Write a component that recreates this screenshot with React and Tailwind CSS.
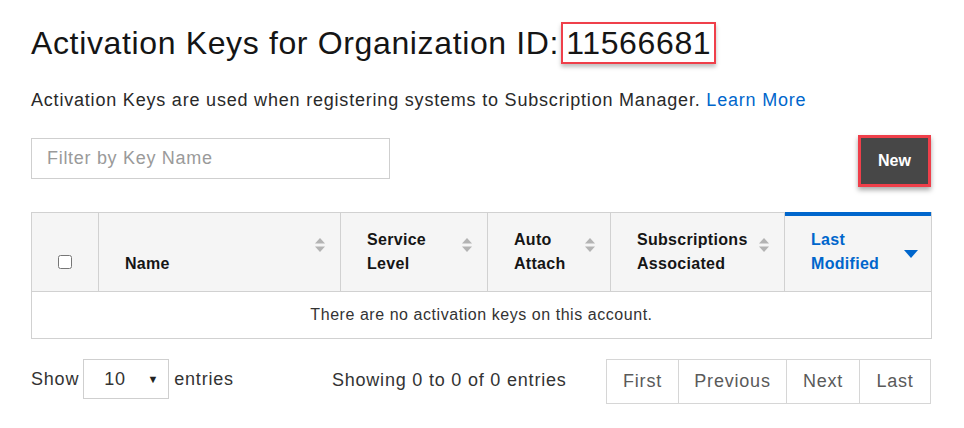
import { useState } from "react";

const columns = [
    { key: "name", label: ["Name"], width: "w-[242px]" },
    { key: "service", label: ["Service", "Level"], width: "w-[147px]" },
    { key: "auto", label: ["Auto", "Attach"], width: "w-[123px]" },
    { key: "subs", label: ["Subscriptions", "Associated"], width: "w-[174px]" },
];

const SortIcon = () => (
    <svg width="12" height="14" viewBox="0 0 12 14" className="shrink-0 self-center">
        <path d="M6 0 L11 5.5 H1 Z" fill="#b3b3b3" />
        <path d="M1 8.5 H11 L6 14 Z" fill="#b3b3b3" />
    </svg>
);

const App = () => {
    const [filter, setFilter] = useState("");
    const [perPage, setPerPage] = useState("10");

    return (
        <div className="min-h-screen bg-white pl-[31px] pr-[33px] pt-[22px] font-['Liberation_Sans',sans-serif] text-[#151515]">
            <h1 className="flex items-center text-[32px] font-medium leading-[42px] tracking-[0.64px]">
                <span>Activation Keys for Organization ID:</span>
                <span className="ml-[2px] border-2 border-[#ef3f4a] px-[3px] leading-[38px] shadow-[0_3px_4px_rgba(0,0,0,0.25)]">
                    11566681
                </span>
            </h1>

            <p className="mt-[23px] text-[18px] leading-[26px] tracking-[0.8px] text-[#292929]">
                Activation Keys are used when registering systems to Subscription Manager.{" "}
                <a href="#" className="text-[#0066cc]">Learn More</a>
            </p>

            <div className="mt-[22px] flex items-start justify-between">
                <input
                    type="text"
                    placeholder="Filter by Key Name"
                    value={filter}
                    onChange={(e) => setFilter(e.target.value)}
                    className="mt-[3px] h-[41px] w-[359px] border border-[#cfcfcf] px-[15px] text-[18px] tracking-[0.7px] text-[#333] placeholder-[#9a9a9a] outline-none"
                />
                <div className="border-[3px] border-[#ef3f4a] shadow-[0_3px_5px_rgba(0,0,0,0.35)]">
                    <button className="h-[46px] w-[67px] bg-[#474747] text-[16px] font-bold text-white">
                        New
                    </button>
                </div>
            </div>

            <table className="mt-[25px] w-[900px] table-fixed border-collapse border border-[#d1d1d1]">
                <thead>
                    <tr className="h-[79px] bg-[#f5f5f5]">
                        <th className="w-[67px] border border-[#d1d1d1] align-middle">
                            <input type="checkbox" className="mt-[26px] h-[14px] w-[14px]" />
                        </th>
                        {columns.map((c) => (
                            <th key={c.key} className={`${c.width} border border-[#d1d1d1] p-0`}>
                                <div className="flex h-[78px] items-end justify-between pb-[15px] pl-[26px] pr-[14px]">
                                    <div className="text-left text-[16px] font-bold leading-[24px] tracking-[0.3px] text-[#151515]">
                                        {c.label.map((l) => (
                                            <div key={l}>{l}</div>
                                        ))}
                                    </div>
                                    <SortIcon />
                                </div>
                            </th>
                        ))}
                        <th className="w-[147px] border border-[#d1d1d1] border-t-[#0066cc] p-0">
                            <div className="border-t-[3px] border-[#0066cc]">
                                <div className="flex h-[75px] items-end justify-between pb-[15px] pl-[26px] pr-[13px]">
                                    <div className="text-left text-[16px] font-bold leading-[24px] tracking-[0.3px] text-[#0066cc]">
                                        <div>Last</div>
                                        <div>Modified</div>
                                    </div>
                                    <svg width="14" height="8" viewBox="0 0 14 8" className="mb-[18px] shrink-0">
                                        <path d="M0 0 H14 L7 8 Z" fill="#0066cc" />
                                    </svg>
                                </div>
                            </div>
                        </th>
                    </tr>
                </thead>
                <tbody>
                    <tr className="h-[47px]">
                        <td colSpan={6} className="text-center text-[16px] tracking-[0.55px] text-[#333]">
                            There are no activation keys on this account.
                        </td>
                    </tr>
                </tbody>
            </table>

            <div className="mt-[20px] flex items-start justify-between text-[18px] tracking-[0.8px] text-[#333]">
                <div className="flex items-center">
                    <span>Show</span>
                    <div className="relative ml-[4px] mr-[5px] h-[40px] w-[86px] border border-[#cfcfcf]">
                        <select
                            value={perPage}
                            onChange={(e) => setPerPage(e.target.value)}
                            className="h-full w-full appearance-none bg-transparent pl-[20px] text-[18px] text-[#333] outline-none"
                        >
                            <option>10</option>
                            <option>25</option>
                            <option>50</option>
                        </select>
                        <span className="pointer-events-none absolute right-[9px] top-[11px] text-[11px] text-[#222]">▼</span>
                    </div>
                    <span>entries</span>
                </div>
                <div className="ml-[98px] mt-[8px] flex-1">Showing 0 to 0 of 0 entries</div>
                <div className="flex h-[45px] border border-[#d6d6d6] text-[18px] text-[#5a5a5a]">
                    <button className="w-[72px] border-r border-[#d6d6d6]">First</button>
                    <button className="w-[108px] border-r border-[#d6d6d6]">Previous</button>
                    <button className="w-[73px] border-r border-[#d6d6d6]">Next</button>
                    <button className="w-[70px]">Last</button>
                </div>
            </div>
        </div>
    );
};

export default App;
